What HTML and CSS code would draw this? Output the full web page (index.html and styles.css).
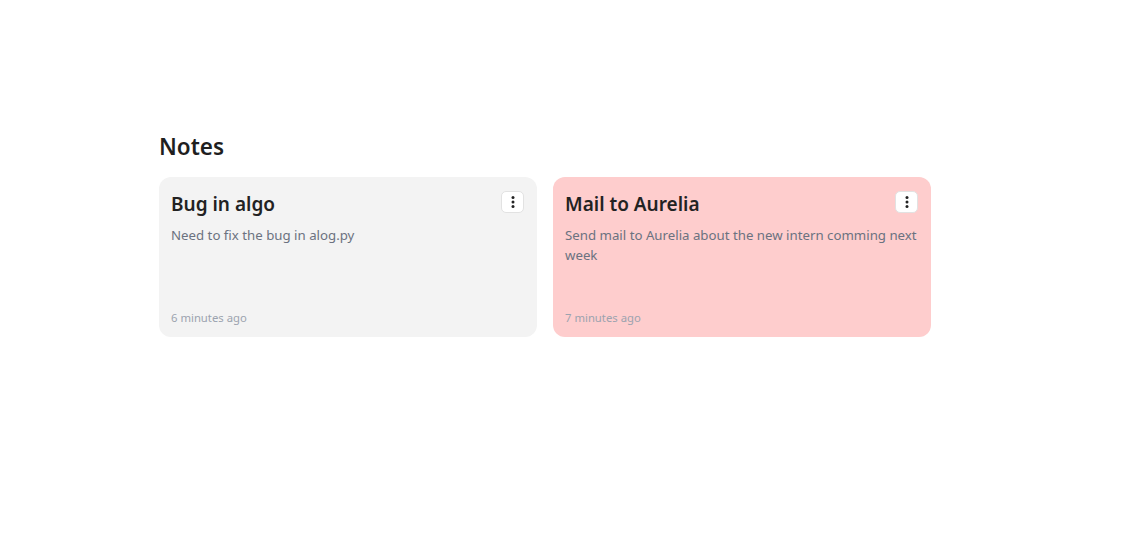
FILE: index.html
```html
<!DOCTYPE html>
<html>
<head>
<meta charset="utf-8">
<link rel="stylesheet" href="styles.css">
</head>
<body>
<main class="page">
  <h1 class="heading">Notes</h1>
  <div class="grid">
    <div class="card card-gray">
      <div class="card-head">
        <h2 class="card-title">Bug in algo</h2>
        <button class="menu-btn" aria-label="menu">
          <svg width="4" height="12" viewBox="0 0 4 12"><circle cx="2" cy="1.6" r="1.5" fill="#222"/><circle cx="2" cy="6" r="1.5" fill="#222"/><circle cx="2" cy="10.4" r="1.5" fill="#222"/></svg>
        </button>
      </div>
      <p class="card-body">Need to fix the bug in alog.py</p>
      <div class="card-time">6 minutes ago</div>
    </div>
    <div class="card card-pink">
      <div class="card-head">
        <h2 class="card-title">Mail to Aurelia</h2>
        <button class="menu-btn" aria-label="menu">
          <svg width="4" height="12" viewBox="0 0 4 12"><circle cx="2" cy="1.6" r="1.5" fill="#222"/><circle cx="2" cy="6" r="1.5" fill="#222"/><circle cx="2" cy="10.4" r="1.5" fill="#222"/></svg>
        </button>
      </div>
      <p class="card-body">Send mail to Aurelia about the new intern comming next week</p>
      <div class="card-time">7 minutes ago</div>
    </div>
  </div>
</main>
</body>
</html>
```
FILE: styles.css
```css
* { box-sizing: border-box; }
html, body { margin: 0; padding: 0; background: #fff; }
body {
  font-family: "Noto Sans", "Open Sans", sans-serif;
  color: #222;
}
.page {
  padding: 131px 0 0 159px;
}
.heading {
  margin: 0 0 14px 0;
  font-size: 22.5px;
  line-height: 32px;
  font-weight: 600;
  color: #1f1f1f;
}
.grid {
  display: grid;
  grid-template-columns: 378px 378px;
  column-gap: 16px;
}
.card {
  height: 160px;
  border-radius: 12px;
  padding: 13px 12px 11px 12px;
  display: flex;
  flex-direction: column;
}
.card-gray { background: #f3f3f3; }
.card-pink { background: #fecdcd; }
.card-head {
  display: flex;
  justify-content: space-between;
  align-items: flex-start;
}
.card-title {
  margin: 0;
  font-size: 19px;
  line-height: 28px;
  font-weight: 600;
  color: #222;
}
.menu-btn {
  width: 23px;
  height: 22px;
  margin-top: 1px;
  margin-right: 1px;
  border: 1px solid #e2e2e2;
  border-radius: 5px;
  background: #fff;
  padding: 0;
  display: flex;
  align-items: center;
  justify-content: center;
}
.card-body {
  margin: 7px 0 0 0;
  font-size: 13.25px;
  line-height: 20px;
  color: #6b7280;
}
.card-time {
  margin-top: auto;
  font-size: 11.3px;
  line-height: 16px;
  color: #9ca3af;
}
```
